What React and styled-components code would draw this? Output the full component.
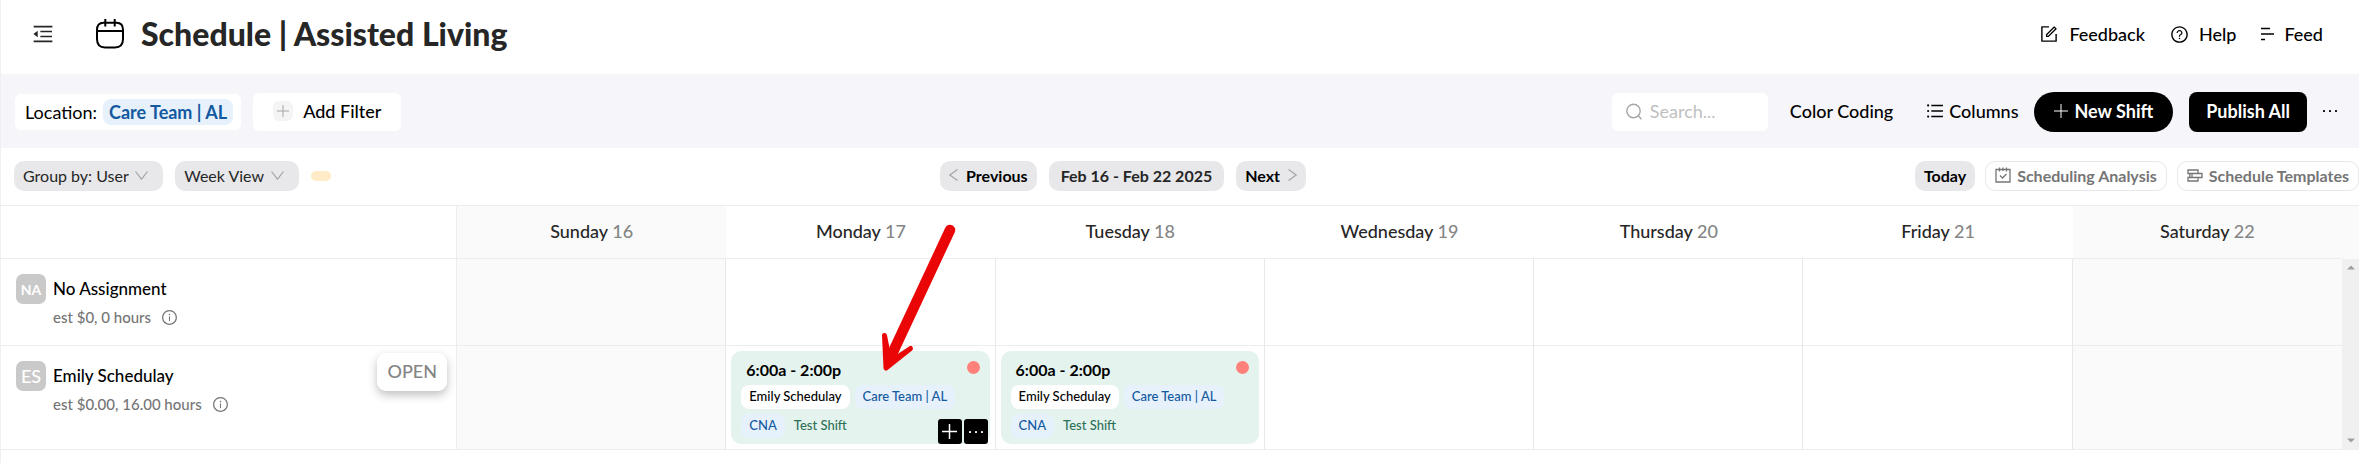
import React from 'react';
import styled, { createGlobalStyle } from 'styled-components';
import {
  AiOutlineMenuFold,
  AiOutlineForm,
  AiOutlineQuestionCircle,
  AiOutlineUnorderedList,
  AiOutlineInfoCircle,
} from 'react-icons/ai';

const GlobalStyle = createGlobalStyle`
  * {
    box-sizing: border-box;
  }

  body {
    margin: 0;
    background: #fff;
    color: #000;
    font-family: Lato, "Liberation Sans", sans-serif;
    font-size: 18px;
  }

  button, input, select {
    font: inherit;
    color: inherit;
    letter-spacing: inherit;
    border: 0;
    margin: 0;
    padding: 0;
    background: none;
  }

  button {
    cursor: pointer;
  }

  svg {
    flex: none;
    display: block;
  }
`;

const Page = styled.div`
  border-left: 1px solid #f0f0f2;
  min-height: 100vh;
`;

const Group = styled.div`
  display: flex;
  align-items: center;
  gap: ${props => props.$gap || 12}px;
`;

/* header */

const Header = styled.header`
  display: flex;
  justify-content: space-between;
  align-items: center;
  height: 74px;
  padding: 0 36px 6px 30px;
`;

const MenuButton = styled.button`
  margin-right: 24px;
  color: #262626;
`;

const Title = styled.h1`
  margin: 0;
  color: #262626;
  font-size: 32px;
  font-weight: 900;
  line-height: 40px;
`;

const HeaderLink = styled.a`
  display: flex;
  align-items: center;
  gap: 10px;
  color: #000;
  font-weight: 500;
  text-decoration: none;
`;

/* filter bar */

const FilterBar = styled.section`
  display: flex;
  justify-content: space-between;
  align-items: center;
  height: 74px;
  padding: 2px 22px 0 14px;
  background: #f5f5fa;
`;

const FilterBox = styled.div`
  display: flex;
  align-items: center;
  gap: 6px;
  height: 36px;
  padding: 0 8px 0 10px;
  border-radius: 6px;
  background: #fff;
`;

const FilterValue = styled.button`
  height: 26px;
  padding: 0 6px 1px;
  border-radius: 8px;
  background: #e6f1fc;
  color: #1259a0;
  font-weight: 700;
`;

const AddFilter = styled.button`
  display: flex;
  align-items: center;
  gap: 10px;
  height: 38px;
  padding: 0 20px 2px;
  border-radius: 6px;
  background: #fff;
  font-weight: 500;
`;

const PlusChip = styled.span`
  display: grid;
  place-items: center;
  width: 20px;
  height: 20px;
  border-radius: 6px;
  background: #f4f4f5;
  color: #a6a6a6;
`;

const SearchBox = styled.label`
  display: flex;
  align-items: center;
  gap: 8px;
  width: 156px;
  height: 38px;
  padding: 0 14px 2px;
  border-radius: 6px;
  background: #fff;
  color: #a6a6a6;

  input {
    flex: 1;
    min-width: 0;
    outline: none;
    color: #000;
  }

  input::placeholder {
    color: #bfbfbf;
    opacity: 1;
  }
`;

const TextButton = styled.button`
  display: flex;
  align-items: center;
  gap: 4px;
  padding-bottom: 2px;
  font-weight: 500;
`;

const DarkButton = styled.button`
  display: flex;
  align-items: center;
  gap: 6px;
  height: 40px;
  padding: 0 ${props => (props.$round ? 20 : 17)}px 2px;
  border-radius: ${props => (props.$round ? 20 : 8)}px;
  background: #000;
  color: #fff;
  font-weight: 700;
`;

/* toolbar */

const Toolbar = styled.section`
  display: flex;
  justify-content: space-between;
  align-items: center;
  height: 58px;
  padding: 0 0 2px 13px;
  border-bottom: 1px solid #ededed;
  font-size: 16px;
`;

const Pill = styled.div`
  display: flex;
  align-items: center;
  gap: 6px;
  height: 30px;
  padding: 0 15px 1px 9px;
  border-radius: 10px;
  background: #e8e8ea;
  color: #262626;

  select {
    appearance: none;
    outline: none;
  }
`;

const PillButton = styled.button`
  display: flex;
  align-items: center;
  gap: 8px;
  height: 30px;
  padding: 0 9px 1px;
  border-radius: 10px;
  background: #e8e8ea;
  font-weight: 700;
`;

const DateRange = styled(PillButton)`
  padding: 0 12px;
  color: #262626;
`;

const OutlineButton = styled(PillButton)`
  gap: 6px;
  border: 1px solid #e8e8ea;
  background: #fff;
  color: #757575;
`;

const Marker = styled.span`
  width: 20px;
  height: 10px;
  border-radius: 5px;
  background: #ffebc6;
`;

/* schedule */

const Schedule = styled.table`
  width: 100%;
  table-layout: fixed;
  border-collapse: separate;
  border-spacing: 0;
`;

const DayHead = styled.th`
  height: 53px;
  padding: 0 0 2px;
  border-bottom: 1px solid #ededed;
  background: ${props => (props.$weekend ? '#fafafa' : '#fff')};
  color: #262626;
  font-weight: 500;

  span {
    color: #858585;
  }
`;

const Corner = styled.td`
  border-right: 1px solid #ededed;
  border-bottom: 1px solid #ededed;
`;

const ScrollHead = styled.td`
  background: #fafafa;
`;

const PersonCell = styled.th`
  height: ${props => props.$height}px;
  padding: 15px 9px 0 15px;
  border-right: 1px solid #ededed;
  border-bottom: 1px solid #ededed;
  font-weight: 400;
  text-align: left;
  vertical-align: top;
`;

const PersonLayout = styled.div`
  display: flex;
  gap: 7px;
`;

const Avatar = styled.span`
  display: grid;
  place-items: center;
  width: 30px;
  height: 30px;
  border-radius: 7px;
  background: #c9c9c9;
  color: #fff;
  font-size: ${props => (props.$large ? 18 : 14)}px;
  font-weight: ${props => (props.$large ? 500 : 700)};
`;

const PersonInfo = styled.div`
  flex: 1;
  line-height: 29px;
`;

const PersonName = styled.div`
  font-size: 17px;
  font-weight: 500;
`;

const Estimate = styled.div`
  display: flex;
  align-items: center;
  gap: 10px;
  color: #757575;
  font-size: 15px;
  font-weight: 500;
`;

const OpenButton = styled.button`
  align-self: flex-start;
  height: 38px;
  margin-top: -8px;
  padding: 0 10px 2px;
  border-radius: 9px;
  background: #fff;
  color: #858585;
  font-weight: 500;
  box-shadow: 0 4px 10px rgba(0, 0, 0, 0.25);
`;

const DayCell = styled.td`
  position: relative;
  padding: 5px;
  border-right: ${props => (props.$last ? 0 : 1)}px solid #e8e8e8;
  border-bottom: 1px solid #ededed;
  background: ${props => (props.$weekend ? '#fafafa' : '#fff')};
  vertical-align: top;
`;

const ScrollCell = styled.td`
  padding: 0;
  background: #f0f0f0;
  vertical-align: top;
`;

const ScrollTrack = styled.div`
  display: flex;
  flex-direction: column;
  justify-content: space-between;
  align-items: center;
  height: 190px;
  padding: 6px 0;
  color: #a0a0a0;
`;

const ShiftCard = styled.article`
  position: relative;
  height: 93px;
  padding: 8px 10px;
  border-radius: 10px;
  background: #e4f3ee;
`;

const ShiftTop = styled.div`
  display: flex;
  justify-content: space-between;
  padding: 0 0 4px 5px;
  font-size: 16px;
  font-weight: 700;
  line-height: 22px;
`;

const Dot = styled.span`
  width: 13px;
  height: 13px;
  margin-top: 2px;
  border-radius: 50%;
  background: #ff817a;
`;

const Tags = styled.div`
  display: flex;
  gap: 5px;
  margin-bottom: 5px;
`;

const tagColors = {
  user: ['#fff', '#000'],
  location: ['#e6f1fc', '#1259a0'],
  note: ['transparent', '#2f7157'],
};

const Tag = styled.span`
  height: 24px;
  padding: 0 ${props => (props.$kind === 'note' ? 4 : 8)}px;
  border-radius: 8px;
  background: ${props => tagColors[props.$kind][0]};
  color: ${props => tagColors[props.$kind][1]};
  font-size: 13px;
  font-weight: 500;
  line-height: 22px;
`;

const CardActions = styled.div`
  position: absolute;
  right: 2px;
  bottom: 0;
  display: flex;
  gap: 2px;
`;

const CardAction = styled.button`
  display: grid;
  place-items: center;
  width: 24px;
  height: 25px;
  border-radius: 3px;
  background: #000;
  color: #fff;
`;

const Arrow = styled.svg`
  position: absolute;
  left: 148px;
  bottom: 72px;
  pointer-events: none;
`;

const PlusIcon = ({ size, stroke = 1 }) => (
  <svg width={size} height={size} viewBox={`0 0 ${size} ${size}`} stroke="currentColor" strokeWidth={stroke}>
    <path d={`M${size / 2} 0V${size}M0 ${size / 2}H${size}`} />
  </svg>
);

const DotsIcon = () => (
  <svg width="14" height="4" viewBox="0 0 14 4" fill="currentColor">
    {[0, 6, 12].map(x => (
      <rect key={x} x={x} y="1" width="2" height="2" rx="0.4" />
    ))}
  </svg>
);

const chevrons = {
  down: [13, 9, 'M0.5 0.5L6.5 8.2L12.5 0.5'],
  left: [9, 12, 'M8.5 0.5L0.8 6L8.5 11.5'],
  right: [9, 12, 'M0.5 0.5L8.2 6L0.5 11.5'],
};

const Chevron = ({ to }) => {
  const [width, height, d] = chevrons[to];
  return (
    <svg width={width} height={height} viewBox={`0 0 ${width} ${height}`} fill="none" stroke="#a6a6a6" strokeWidth="1.2">
      <path d={d} />
    </svg>
  );
};

const SearchIcon = () => (
  <svg width="16" height="17" viewBox="0 0 16 17" fill="none" stroke="currentColor" strokeWidth="1.4">
    <circle cx="7.5" cy="8" r="6.7" />
    <path d="M12 12.5L15.5 16.2" />
  </svg>
);

const CalendarIcon = () => (
  <svg width="28" height="30" viewBox="0 0 28 30" fill="none" stroke="#000" strokeWidth="2">
    <path d="M7.5 3.8H20.5C25 3.8 27 6.5 27 11V20C27 26 24.5 28.4 19 28.4H9C3.5 28.4 1 26 1 20V11C1 6.5 3 3.8 7.5 3.8Z" />
    <path d="M1.5 12H26.5M9.3 0V7.5M18.7 0V7.5" />
  </svg>
);

const FeedIcon = () => (
  <svg width="13" height="14" viewBox="0 0 13 14" stroke="#000" strokeWidth="1.3">
    <path d="M0 1.5H9M0 7H13M0 12.5H4" />
  </svg>
);

const AnalysisIcon = () => (
  <svg width="16" height="16" viewBox="0 0 16 16" fill="none" stroke="currentColor" strokeWidth="1.3">
    <path d="M1 2.5H15V15H1ZM4.5 0.5V4.5M8 0.5V4M11.5 0.5V4.5M5 8.5L7.5 11L11.5 7" />
  </svg>
);

const TemplatesIcon = () => (
  <svg width="16" height="13" viewBox="0 0 16 13" fill="none" stroke="currentColor" strokeWidth="1.3">
    <path d="M1 1H11V4.5H1ZM5 4.5H15V8.5H5ZM1 8.5H11V12H1ZM2.8 4.5V8.5" />
  </svg>
);

const Triangle = ({ up }) => (
  <svg width="8" height="5" viewBox="0 0 8 5" fill="currentColor">
    <path d={up ? 'M0 4.5L4 0.5L8 4.5Z' : 'M0 0.5L4 4.5L8 0.5Z'} />
  </svg>
);

const days = [
  { name: 'Sunday', date: 16, weekend: true },
  { name: 'Monday', date: 17 },
  { name: 'Tuesday', date: 18 },
  { name: 'Wednesday', date: 19 },
  { name: 'Thursday', date: 20 },
  { name: 'Friday', date: 21 },
  { name: 'Saturday', date: 22, weekend: true },
];

const people = [
  { name: 'No Assignment', initials: 'NA', estimate: 'est $0, 0 hours', height: 87, shifts: [] },
  {
    name: 'Emily Schedulay',
    initials: 'ES',
    estimate: 'est $0.00, 16.00 hours',
    height: 104,
    open: true,
    shifts: [17, 18],
  },
];

function Shift({ active }) {
  return (
    <ShiftCard>
      <ShiftTop>
        6:00a - 2:00p
        <Dot />
      </ShiftTop>
      <Tags>
        <Tag $kind="user">Emily Schedulay</Tag>
        <Tag $kind="location">Care Team | AL</Tag>
      </Tags>
      <Tags>
        <Tag $kind="location">CNA</Tag>
        <Tag $kind="note">Test Shift</Tag>
      </Tags>
      {active && (
        <>
          <CardActions>
            <CardAction aria-label="Add shift"><PlusIcon size={15} stroke={1.5} /></CardAction>
            <CardAction aria-label="More"><DotsIcon /></CardAction>
          </CardActions>
          <Arrow width="80" height="152" viewBox="0 -2 80 152" fill="#ea0606" stroke="#ea0606" strokeLinejoin="round" strokeLinecap="round">
            <path d="M71 8L14 130" strokeWidth="10.5" />
            <path d="M7 146L5.5 113.5L10 136L17 136L31.5 126.5Z" strokeWidth="5" />
          </Arrow>
        </>
      )}
    </ShiftCard>
  );
}

function App() {
  return (
    <Page>
      <GlobalStyle />
      <Header>
        <Group $gap={17}>
          <MenuButton aria-label="Toggle menu"><AiOutlineMenuFold size={24} /></MenuButton>
          <CalendarIcon />
          <Title>Schedule | Assisted Living</Title>
        </Group>
        <Group $gap={25}>
          <HeaderLink href="#feedback"><AiOutlineForm size={20} />Feedback</HeaderLink>
          <HeaderLink href="#help"><AiOutlineQuestionCircle size={19} />Help</HeaderLink>
          <HeaderLink href="#feed"><FeedIcon />Feed</HeaderLink>
        </Group>
      </Header>

      <FilterBar>
        <Group>
          <FilterBox>
            Location:
            <FilterValue>Care Team | AL</FilterValue>
          </FilterBox>
          <AddFilter>
            <PlusChip><PlusIcon size={12} /></PlusChip>
            Add Filter
          </AddFilter>
        </Group>
        <Group $gap={16}>
          <Group $gap={32}>
            <Group $gap={22}>
              <SearchBox>
                <SearchIcon />
                <input type="text" placeholder="Search..." aria-label="Search" />
              </SearchBox>
              <TextButton>Color Coding</TextButton>
            </Group>
            <TextButton><AiOutlineUnorderedList size={20} />Columns</TextButton>
          </Group>
          <DarkButton $round><PlusIcon size={14} />New Shift</DarkButton>
          <DarkButton>Publish All</DarkButton>
          <TextButton aria-label="More"><DotsIcon /></TextButton>
        </Group>
      </FilterBar>

      <Toolbar>
        <Group>
          <Pill>
            <label htmlFor="group">Group by: <select id="group"><option>User</option></select></label>
            <Chevron to="down" />
          </Pill>
          <Pill>
            <select aria-label="View"><option>Week View</option></select>
            <Chevron to="down" />
          </Pill>
          <Marker />
        </Group>
        <Group>
          <PillButton><Chevron to="left" />Previous</PillButton>
          <DateRange>Feb 16 - Feb 22 2025</DateRange>
          <PillButton>Next<Chevron to="right" /></PillButton>
        </Group>
        <Group $gap={10}>
          <PillButton>Today</PillButton>
          <OutlineButton><AnalysisIcon />Scheduling Analysis</OutlineButton>
          <OutlineButton><TemplatesIcon />Schedule Templates</OutlineButton>
        </Group>
      </Toolbar>

      <Schedule>
        <colgroup>
          <col width="456" />
          {days.map(day => <col key={day.date} />)}
          <col width="17" />
        </colgroup>
        <thead>
          <tr>
            <Corner />
            {days.map(day => (
              <DayHead key={day.date} $weekend={day.weekend} scope="col">
                {day.name} <span>{day.date}</span>
              </DayHead>
            ))}
            <ScrollHead />
          </tr>
        </thead>
        <tbody>
          {people.map((person, index) => (
            <tr key={person.name}>
              <PersonCell $height={person.height} scope="row">
                <PersonLayout>
                  <Avatar $large={person.open}>{person.initials}</Avatar>
                  <PersonInfo>
                    <PersonName>{person.name}</PersonName>
                    <Estimate>{person.estimate}<AiOutlineInfoCircle size={17} /></Estimate>
                  </PersonInfo>
                  {person.open && <OpenButton>OPEN</OpenButton>}
                </PersonLayout>
              </PersonCell>
              {days.map(day => (
                <DayCell key={day.date} $weekend={day.weekend} $last={day.date === 22}>
                  {person.shifts.includes(day.date) && <Shift active={day.date === 17} />}
                </DayCell>
              ))}
              {index === 0 && (
                <ScrollCell rowSpan={people.length}>
                  <ScrollTrack><Triangle up /><Triangle /></ScrollTrack>
                </ScrollCell>
              )}
            </tr>
          ))}
        </tbody>
      </Schedule>
    </Page>
  );
}

export default App;
